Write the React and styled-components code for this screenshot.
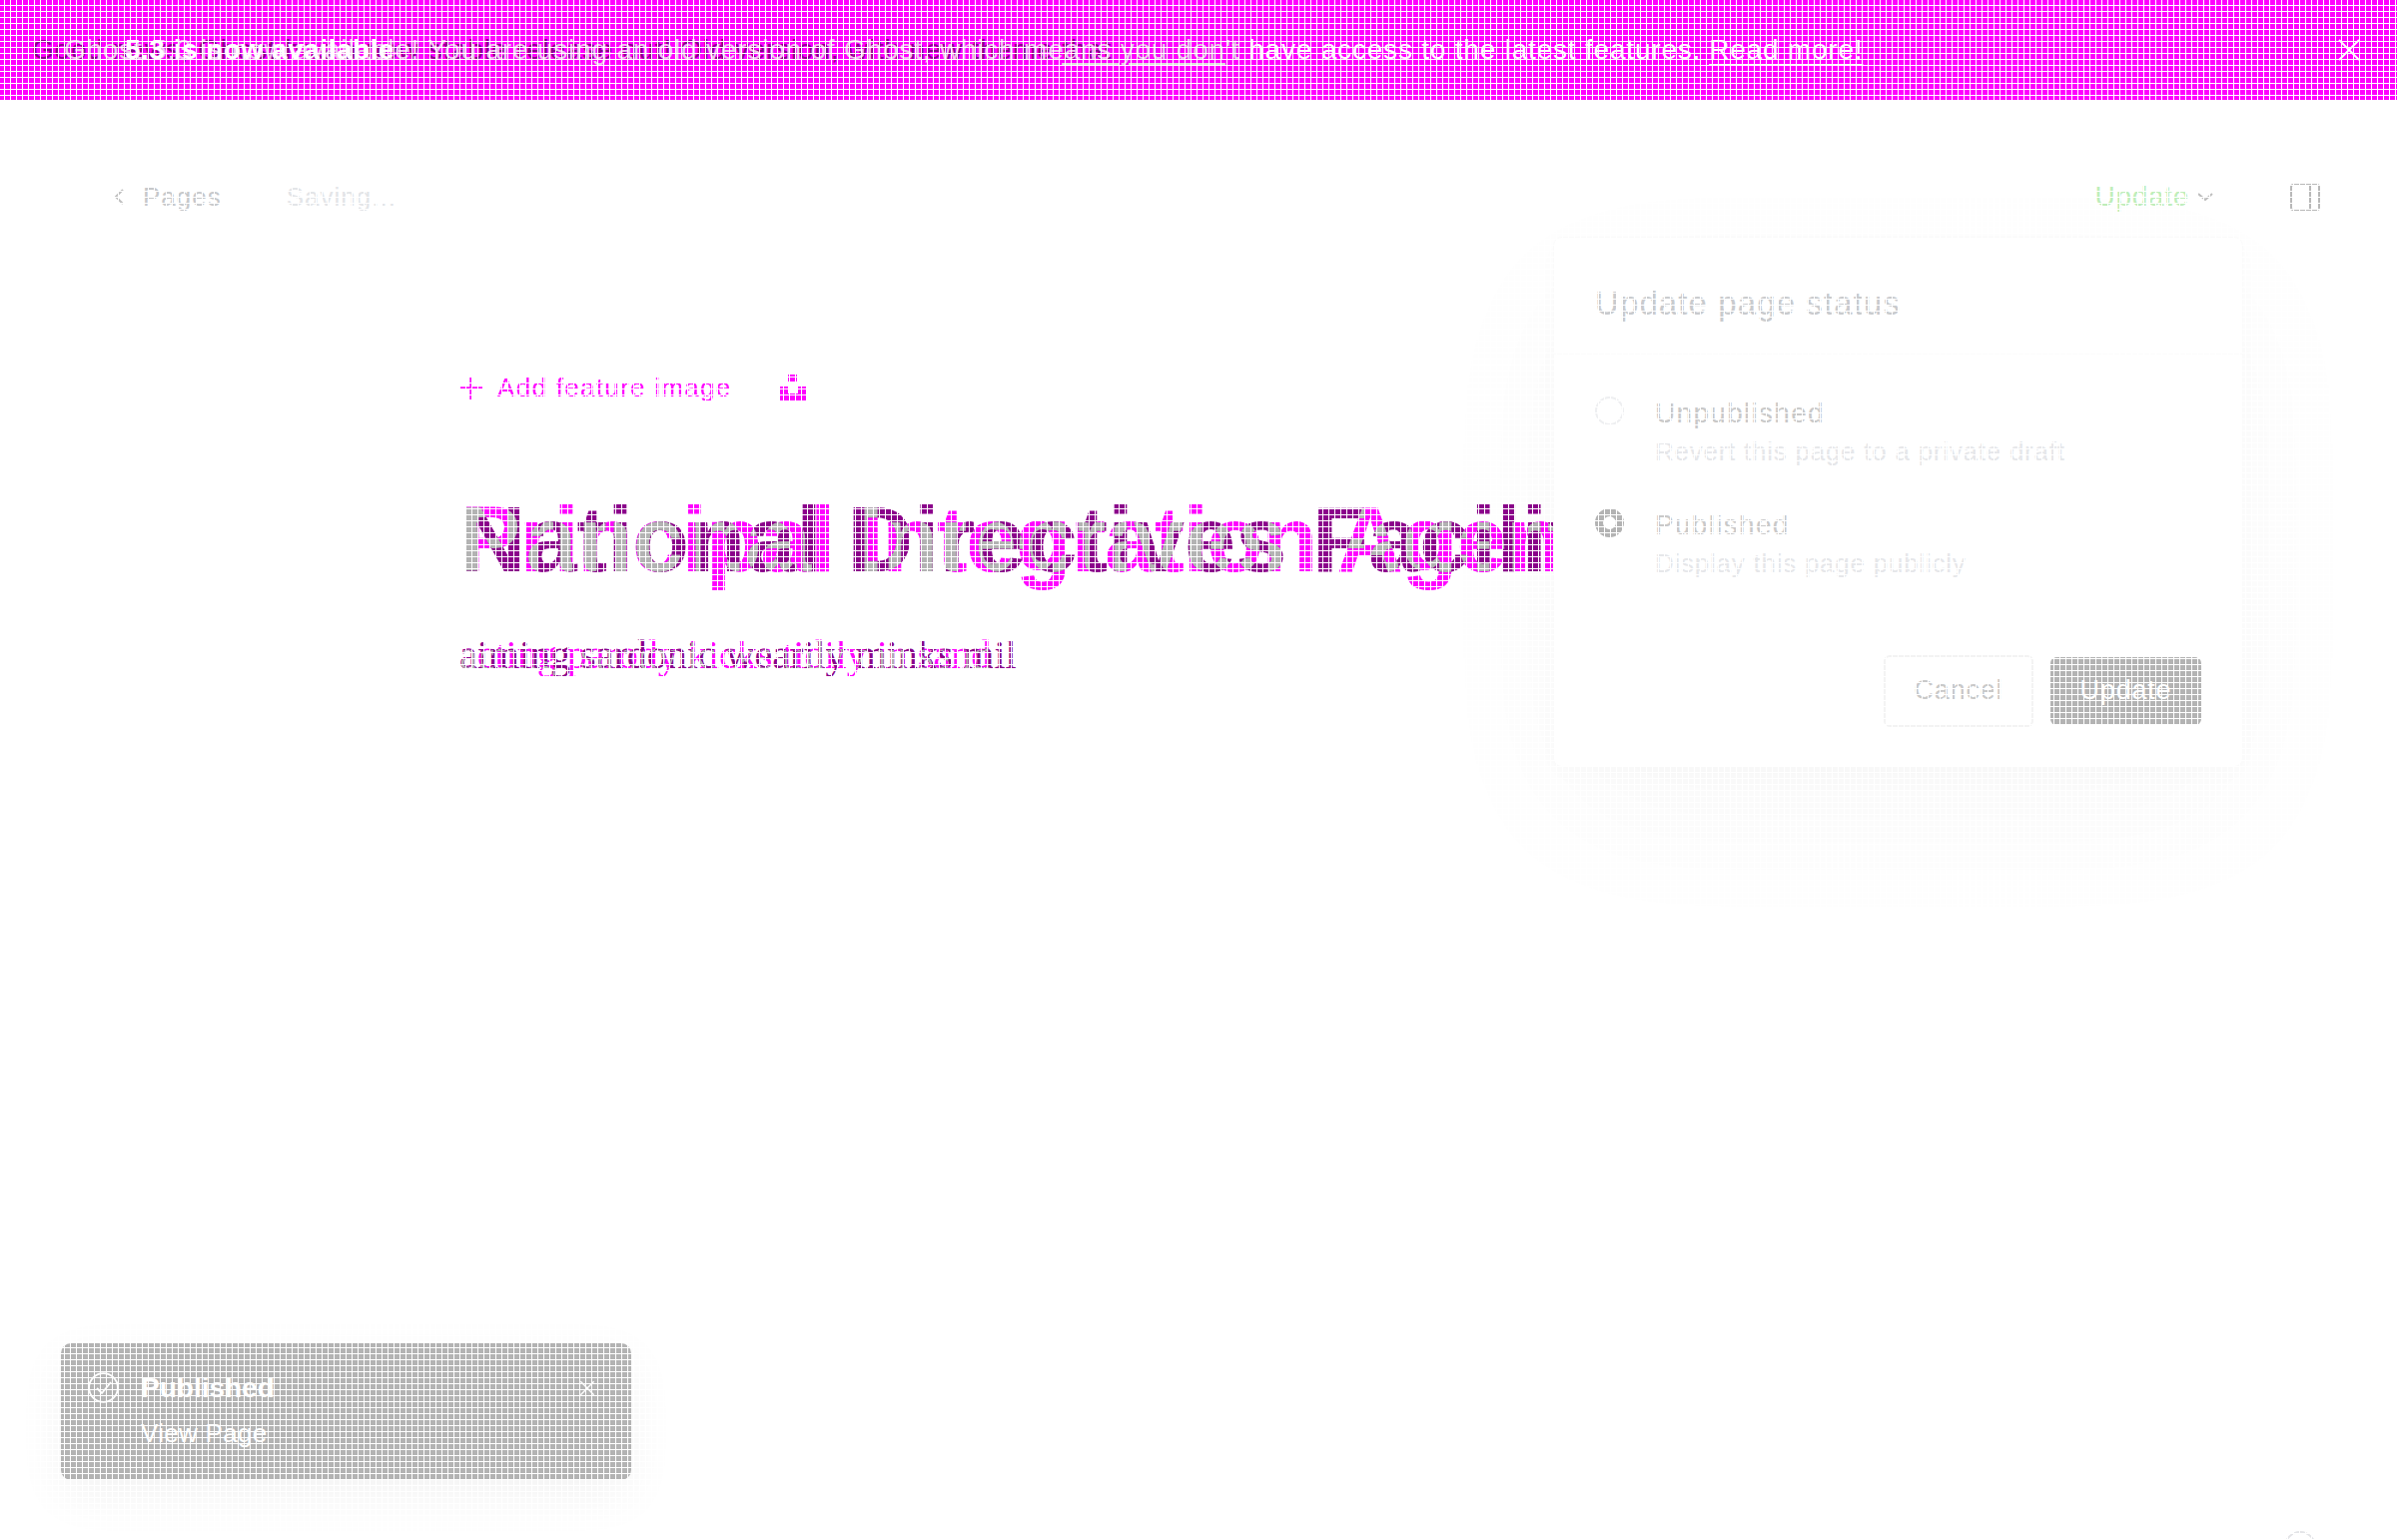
import React from 'react';
import styled, { createGlobalStyle } from 'styled-components';

const GlobalStyle = createGlobalStyle`
  html, body {
    margin: 0;
    padding: 0;
    background: #fff;
    font-family: "Liberation Sans", Arial, sans-serif;
  }
`;

const Page = styled.div`
  position: relative;
  width: 2400px;
  height: 1542px;
  overflow: hidden;
  background: #fff;
  display: flex;
  flex-direction: column;

  /* white mesh that runs over the whole shot */
  &::after {
    content: '';
    position: absolute;
    inset: 0;
    z-index: 50;
    pointer-events: none;
    background-image:
      linear-gradient(to right, #fff 1px, transparent 1px),
      linear-gradient(to bottom, #fff 1px, transparent 1px);
    background-size: 6px 6px;
    background-position: 4px 5px;
  }
`;

const Banner = styled.div`
  flex: none;
  height: 100px;
  background: #ff00ff;
  display: flex;
  align-items: center;
  justify-content: space-between;
  padding: 0 36px 0 32px;
  box-sizing: border-box;
  font-size: 28px;
  letter-spacing: 0.8px;
  color: #fff;
  white-space: nowrap;
`;

const BannerText = styled.div`
  display: flex;
  align-items: baseline;
`;

const LeadStack = styled.div`
  display: grid;
`;

const LeadLayer = styled.span`
  grid-area: 1 / 1;
  justify-self: ${({ $start }) => ($start ? 'start' : 'end')};
  color: ${({ $color }) => $color};
  font-weight: ${({ $bold }) => ($bold ? 700 : 400)};
  letter-spacing: ${({ $bold }) => ($bold ? 0.5 : 0.8)}px;
  padding-left: ${({ $indent }) => $indent || 0}px;

  u {
    text-decoration-thickness: 3px;
    text-underline-offset: 4px;
    text-decoration-color: #ddd;
  }
`;

const ReadMore = styled.a`
  color: #fff;
  text-decoration: underline;
  text-decoration-thickness: 2px;
  text-underline-offset: 5px;
  margin-left: 8px;
`;

const CloseBtn = styled.span`
  display: flex;
  color: #fff;
  margin-top: ${({ $top }) => $top || 0}px;
`;

const Nav = styled.div`
  flex: none;
  height: 194px;
  display: flex;
  align-items: center;
  justify-content: space-between;
  padding: 0 77px 0 115px;
  box-sizing: border-box;
  font-size: 26px;
  letter-spacing: 1px;
`;

const NavGroup = styled.div`
  display: flex;
  align-items: center;
`;

const BackLink = styled.span`
  color: #c6c8cb;
  margin: 0 65px 0 19px;
`;

const Saving = styled.span`
  color: #e3e5e8;
`;

const UpdateLink = styled.span`
  color: #bfeeba;
  font-size: 28px;
  letter-spacing: 0.7px;
  margin-right: 8px;
`;

const PanelToggle = styled.span`
  display: flex;
  margin-left: 77px;
`;

const Editor = styled.div`
  width: 1480px;
  margin: 0 auto;
  flex: 1;
`;

const FeatureRow = styled.div`
  display: flex;
  align-items: center;
  height: 40px;
  margin-top: 74px;
  color: #ff00ff;
  font-size: 26px;
  letter-spacing: 1.3px;
`;

const FeatureLabel = styled.span`
  margin-left: 15px;
  margin-right: 48px;
`;

const Overlap = styled.div`
  position: relative;
  white-space: nowrap;
  margin-top: ${({ $top }) => $top}px;
  font-family: ${({ $serif }) =>
    $serif ? '"Liberation Serif", Georgia, serif' : '"Liberation Sans", Arial, sans-serif'};
  font-size: ${({ $size }) => $size}px;
  line-height: ${({ $line }) => $line}px;
  font-weight: ${({ $serif }) => ($serif ? 400 : 700)};
  height: ${({ $line }) => $line}px;
`;

const OverlapLayer = styled.div`
  position: absolute;
  left: 0;
  top: 0;
  color: ${({ $color }) => $color};
  letter-spacing: ${({ $spacing }) => $spacing || 0}px;
  clip-path: ${({ $clip }) => ($clip ? `url(#${$clip})` : 'none')};
`;

const HiddenSvg = styled.svg`
  position: absolute;
  width: 0;
  height: 0;
`;

const StatusPanel = styled.div`
  position: absolute;
  left: 1556px;
  top: 238px;
  width: 689px;
  height: 529px;
  z-index: 5;
  background: #fff;
  border-radius: 8px;
  box-sizing: border-box;
  display: flex;
  flex-direction: column;
  box-shadow: 0 0 0 1px #fafafa, 0 50px 160px rgba(0, 0, 0, 0.03), 0 8px 30px rgba(0, 0, 0, 0.015);
`;

const PanelHeader = styled.div`
  height: 117px;
  flex: none;
  box-sizing: border-box;
  padding: 16px 41px 0;
  display: flex;
  align-items: center;
  border-bottom: 1px solid #fbfbfb;
  color: #c9cbce;
  font-size: 33px;
  letter-spacing: 1.1px;
`;

const PanelBody = styled.div`
  flex: 1;
  padding: 42px 41px 0;
  display: flex;
  flex-direction: column;
  gap: 40px;
`;

const Option = styled.div`
  display: flex;
  gap: 31px;
`;

const Radio = styled.span`
  flex: none;
  width: 29px;
  height: 29px;
  border-radius: 50%;
  box-sizing: border-box;
  border: ${({ $on }) => ($on ? '8px solid #b3b3b3' : '2px solid #eeeff1')};
  background: #fff;
`;

const OptionText = styled.div`
  display: flex;
  flex-direction: column;
  gap: 4px;
`;

const OptionName = styled.div`
  color: #c9c9c9;
  font-size: 28px;
  line-height: 34px;
  letter-spacing: 1.3px;
`;

const OptionHint = styled.div`
  color: #e6e7ea;
  font-size: 26px;
  line-height: 34px;
  letter-spacing: 0.75px;
`;

const PanelFooter = styled.div`
  height: 144px;
  flex: none;
  box-sizing: border-box;
  border-top: 1px solid #fbfbfb;
  display: flex;
  justify-content: flex-end;
  align-items: center;
  gap: 17px;
  padding: 0 41px 8px;
`;

const Button = styled.span`
  display: flex;
  align-items: center;
  justify-content: center;
  box-sizing: border-box;
  width: ${({ $primary }) => ($primary ? 151 : 150)}px;
  height: ${({ $primary }) => ($primary ? 68 : 72)}px;
  border-radius: 6px;
  font-size: 27px;
  letter-spacing: 0.8px;
  background: ${({ $primary }) => ($primary ? '#b3b3b3' : '#fff')};
  color: ${({ $primary }) => ($primary ? '#fff' : '#c9c9c9')};
  border: ${({ $primary }) => ($primary ? 'none' : '2px solid #f3f3f3')};
`;

const Toast = styled.div`
  position: absolute;
  left: 61px;
  bottom: 60px;
  width: 571px;
  height: 137px;
  z-index: 5;
  box-sizing: border-box;
  padding: 29px 36px 0 27px;
  background: #b3b3b3;
  border-radius: 10px;
  color: #fff;
  display: flex;
  align-items: flex-start;
  box-shadow: 0 16px 50px rgba(0, 0, 0, 0.05);
`;

const ToastText = styled.div`
  flex: 1;
  margin-left: 22px;
`;

const ToastTitle = styled.div`
  font-size: 28px;
  font-weight: 700;
  line-height: 32px;
`;

const ToastLink = styled.a`
  display: inline-block;
  margin-top: 13px;
  font-size: 26px;
  letter-spacing: 0.3px;
  line-height: 32px;
  border-bottom: 1px solid #fff;
`;

const WordCount = styled.div`
  position: absolute;
  left: 2157px;
  top: 1535px;
  display: flex;
  gap: 39px;
  color: #dcdde0;
  font-size: 26px;
  line-height: 32px;
`;

const HelpDot = styled.span`
  width: 28px;
  height: 28px;
  margin-top: -2px;
  border: 2px solid #e3e4e7;
  border-radius: 50%;
`;

const ChevronLeft = () => (
  <svg width="9" height="16" viewBox="0 0 9 16" fill="none" stroke="#c0c0c0" strokeWidth="2">
    <polyline points="8,1 1,8 8,15" />
  </svg>
);

const ChevronDown = () => (
  <svg width="16" height="8" viewBox="0 0 16 8" fill="none" stroke="#bdbdbd" strokeWidth="2">
    <polyline points="1,1 8,7 15,1" />
  </svg>
);

const SidebarIcon = () => (
  <svg width="30" height="27" viewBox="0 0 30 27" fill="none" stroke="#b8b8b8" strokeWidth="2">
    <rect x="1" y="1" width="28" height="25" rx="2" />
    <line x1="20" y1="1" x2="20" y2="26" />
  </svg>
);

const CloseIcon = ({ size, color }) => (
  <svg width={size} height={size} viewBox="0 0 24 24" fill="none" stroke={color} strokeWidth="2">
    <line x1="2" y1="2" x2="22" y2="22" />
    <line x1="22" y1="2" x2="2" y2="22" />
  </svg>
);

const PlusIcon = () => (
  <svg width="23" height="23" viewBox="0 0 23 23" stroke="#ff00ff" strokeWidth="2.4">
    <line x1="11.5" y1="0" x2="11.5" y2="23" />
    <line x1="0" y1="11.5" x2="23" y2="11.5" />
  </svg>
);

const UnsplashIcon = () => (
  <svg width="26" height="27" viewBox="0 0 26 27" fill="#ff00ff">
    <path d="M8 0h9v7H8zM0 12h8v7h10v-7h8v15H0z" />
  </svg>
);

const CheckCircle = () => (
  <svg width="31" height="31" viewBox="0 0 31 31" fill="none" stroke="#fff" strokeWidth="1.8">
    <circle cx="15.5" cy="15.5" r="14.4" />
    <polyline points="9,16 14,21 23,10" />
  </svg>
);

const OverlapText = ({ id, first, second, size, line, baseline, top, serif, family, weight, spacing }) => (
  <Overlap $size={size} $line={line} $top={top} $serif={serif}>
    <HiddenSvg aria-hidden="true">
      <defs>
        <clipPath id={id}>
          <text x="0" y={baseline} fontFamily={family} fontSize={size} fontWeight={weight} letterSpacing={spacing || 0}>
            {first}
          </text>
        </clipPath>
      </defs>
    </HiddenSvg>
    <OverlapLayer $color="#ff00ff" $spacing={spacing}>{first}</OverlapLayer>
    <OverlapLayer $color="#8b008b">{second}</OverlapLayer>
    <OverlapLayer $color="#b3b3b3" $clip={id}>{second}</OverlapLayer>
  </Overlap>
);

const App = () => (
  <Page>
    <GlobalStyle />
    <Banner>
      <BannerText>
        <LeadStack>
          <LeadLayer $color="#8b008b">
            Good news, Ghost has a new stable release out! Old version, with new theme <u>that you don</u>'t
          </LeadLayer>
          <LeadLayer $color="#eec4ee">
            Ghost 5.3 is now available! You are using an old version of Ghost, which means you don't
          </LeadLayer>
          <LeadLayer $color="#fff" $start $bold $indent={93}>5.3 is now available</LeadLayer>
        </LeadStack>
        <span>&nbsp;have access to the latest features.</span>
        <ReadMore>Read more!</ReadMore>
      </BannerText>
      <CloseBtn>
        <CloseIcon size={24} color="#fff" />
      </CloseBtn>
    </Banner>

    <Nav>
      <NavGroup>
        <ChevronLeft />
        <BackLink>Pages</BackLink>
        <Saving>Saving...</Saving>
      </NavGroup>
      <NavGroup>
        <UpdateLink>Update</UpdateLink>
        <ChevronDown />
        <PanelToggle>
          <SidebarIcon />
        </PanelToggle>
      </NavGroup>
    </Nav>

    <Editor>
      <FeatureRow>
        <PlusIcon />
        <FeatureLabel>Add feature image</FeatureLabel>
        <UnsplashIcon />
      </FeatureRow>
      <OverlapText
        id="titleOverlap"
        first="Principal Integration Agent"
        second="National Directives Facilitator"
        size={92}
        line={100}
        baseline={82}
        top={82}
        family="Liberation Sans"
        weight="700"
        spacing={-1.5}
      />
      <OverlapText
        id="bodyOverlap"
        first="acting parody kicks tidily in sand"
        second="aiming sardonic wearily minks mil"
        size={40}
        line={60}
        baseline={44}
        top={36}
        serif
        family="Liberation Serif"
        weight="400"
      />
    </Editor>

    <StatusPanel>
      <PanelHeader>Update page status</PanelHeader>
      <PanelBody>
        <Option>
          <Radio />
          <OptionText>
            <OptionName>Unpublished</OptionName>
            <OptionHint>Revert this page to a private draft</OptionHint>
          </OptionText>
        </Option>
        <Option>
          <Radio $on />
          <OptionText>
            <OptionName>Published</OptionName>
            <OptionHint>Display this page publicly</OptionHint>
          </OptionText>
        </Option>
      </PanelBody>
      <PanelFooter>
        <Button>Cancel</Button>
        <Button $primary>Update</Button>
      </PanelFooter>
    </StatusPanel>

    <Toast>
      <CheckCircle />
      <ToastText>
        <ToastTitle>Published</ToastTitle>
        <ToastLink>View Page</ToastLink>
      </ToastText>
      <CloseBtn $top={8}>
        <CloseIcon size={16} color="#fff" />
      </CloseBtn>
    </Toast>

    <WordCount>
      <span>7 words</span>
      <HelpDot />
    </WordCount>
  </Page>
);

export default App;
